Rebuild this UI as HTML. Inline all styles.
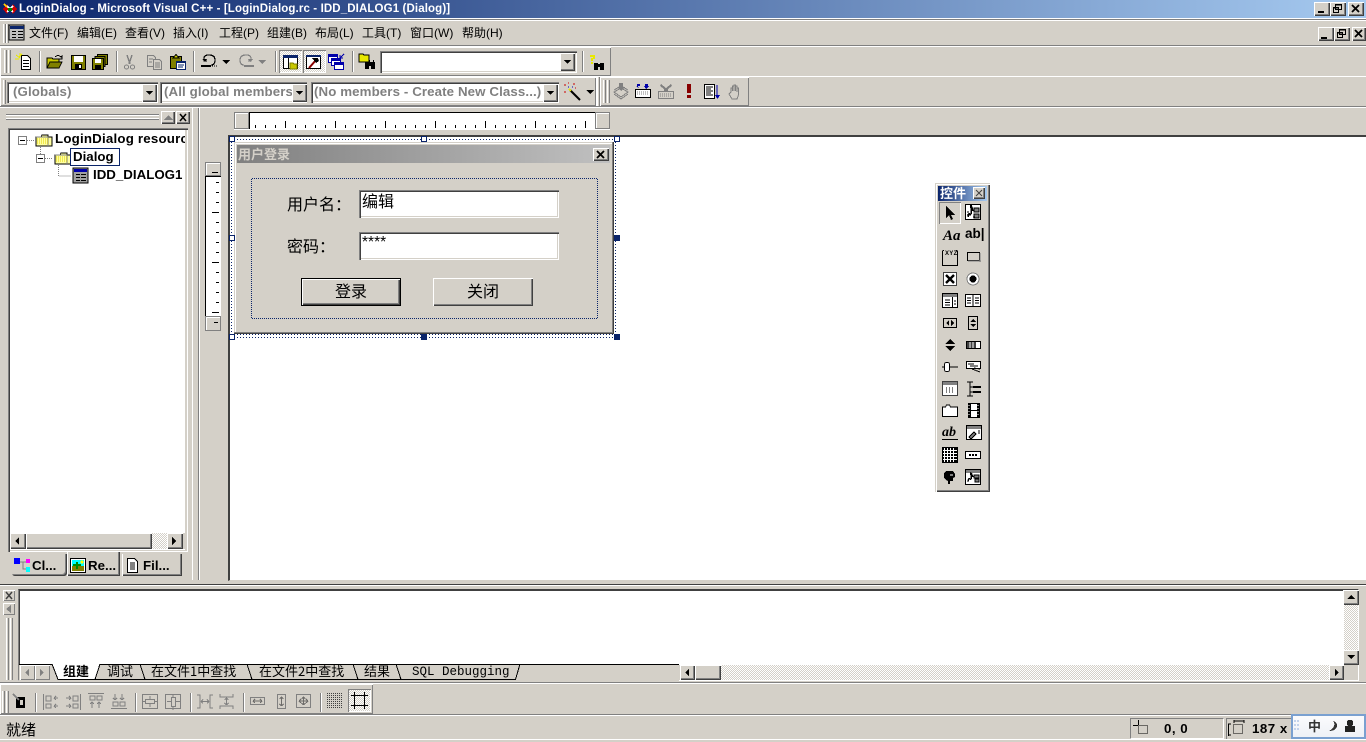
<!DOCTYPE html>
<html><head><meta charset="utf-8"><title>LoginDialog</title>
<style>
html,body{margin:0;padding:0;width:1366px;height:742px;overflow:hidden;background:#d4d0c8}
body{position:relative;font-family:"Liberation Sans","WenQuanYi Zen Hei","Noto Sans CJK SC",sans-serif;font-size:12px;color:#000}
div,span,svg{position:absolute;box-sizing:border-box}
svg{shape-rendering:crispEdges;overflow:visible}
.t{white-space:nowrap;line-height:16px}
.cj{font-family:"Noto Sans CJK SC","Liberation Sans",sans-serif}
.r{background:#d4d0c8;box-shadow:inset 1px 1px 0 #fff,inset -1px -1px 0 #404040,inset -2px -2px 0 #808080}
.tb{box-shadow:inset 1px 1px 0 #fff,inset -1px -1px 0 #808080}
.s{background:#fff;box-shadow:inset 1px 1px 0 #808080,inset 2px 2px 0 #404040,inset -1px -1px 0 #fff,inset -2px -2px 0 #d4d0c8}
.d{background:conic-gradient(#fff 25%,#d4d0c8 0 50%,#fff 0 75%,#d4d0c8 0) 0 0/2px 2px}
.g{width:3px;border-left:1px solid #fff;border-right:1px solid #808080;background:#d4d0c8}
.sep{width:2px;border-left:1px solid #808080;border-right:1px solid #fff}
.pr{box-shadow:inset 1px 1px 0 #808080,inset -1px -1px 0 #fff}
.h{width:6px;height:6px;background:#fff;border:1px solid #0a246a}
.hf{width:6px;height:6px;background:#0a246a}
.cb{color:#808080;font-size:13.300px;font-weight:bold;letter-spacing:.1px}
.dot{background:conic-gradient(#0a246a 25%,#0000 0 50%,#0a246a 0 75%,#0000 0) 0 0/2px 2px}
</style></head><body>

<!-- title bar -->
<div style="left:0;top:0;width:1366px;height:18px;background:linear-gradient(90deg,#0a246a,#a6caf0)"></div>
<svg style="left:2px;top:2px" width="16" height="14" viewBox="0 0 16 14"><path d="M1 7L5 2L8 7L5 12Z" fill="#c00"/><path d="M8 7L11 2L15 7L11 12Z" fill="#c00"/><path d="M5 4L11 10M11 4L5 10" stroke="#fff" stroke-width="2"/><path d="M2 2L5 5" stroke="#fc0" stroke-width="2"/><path d="M6 6h4v3h-4z" fill="#080"/></svg>
<div class="t" style="left:19px;top:1px;color:#fff;font-weight:bold;font-size:11.500px;letter-spacing:.12px">LoginDialog - Microsoft Visual C++ - [LoginDialog.rc - IDD_DIALOG1 (Dialog)]</div>
<div class="r" style="left:1314px;top:2px;width:16px;height:14px"></div><div style="left:1318px;top:11px;width:6px;height:2px;background:#000"></div>
<div class="r" style="left:1330px;top:2px;width:16px;height:14px"></div><svg style="left:1333px;top:4px" width="9" height="9"><path d="M2.500.5h6v5h-6zM.5 3.500h5v5h-5z" fill="none" stroke="#000"/><path d="M2 0h7v1.500H2zM0 3h6v1.500H0z"/></svg>
<div class="r" style="left:1348px;top:2px;width:16px;height:14px"></div><svg style="left:1351px;top:4px" width="10" height="9"><path d="M1 1L8 8M8 1L1 8" stroke="#000" stroke-width="1.800" shape-rendering="geometricPrecision"/></svg>

<div style="left:0;top:18px;width:1366px;height:1px;background:#fff"></div>
<div style="left:0;top:19px;width:1366px;height:1px;background:#808080"></div>
<div style="left:0;top:20px;width:1366px;height:1px;background:#fff"></div>

<!-- menu bar -->
<div class="g" style="left:3px;top:24px;height:19px"></div><div class="g" style="left:6px;top:24px;height:19px"></div>
<svg style="left:9px;top:25px" width="16" height="16"><rect width="15" height="15" fill="#c0c0c0" stroke="#000"/><rect x="1" y="1" width="14" height="3" fill="#0a246a"/><path d="M3 6.500h4M3 9.500h4M3 12.500h4M9 6.500h5M9 9.500h5M9 12.500h5" stroke="#000"/></svg>
<div class="t" style="left:29px;top:25px">文件(F)</div>
<div class="t" style="left:77px;top:25px">编辑(E)</div>
<div class="t" style="left:125px;top:25px">查看(V)</div>
<div class="t" style="left:173px;top:25px">插入(I)</div>
<div class="t" style="left:219px;top:25px">工程(P)</div>
<div class="t" style="left:267px;top:25px">组建(B)</div>
<div class="t" style="left:315px;top:25px">布局(L)</div>
<div class="t" style="left:362px;top:25px">工具(T)</div>
<div class="t" style="left:410px;top:25px">窗口(W)</div>
<div class="t" style="left:462px;top:25px">帮助(H)</div>
<div class="r" style="left:1318px;top:27px;width:16px;height:14px"></div><div style="left:1321px;top:37px;width:6px;height:2px;background:#000"></div>
<div class="r" style="left:1334px;top:27px;width:16px;height:14px"></div><svg style="left:1337px;top:29px" width="9" height="9"><path d="M2.500.5h6v5h-6zM.5 3.500h5v5h-5z" fill="none" stroke="#000"/><path d="M2 0h7v1.500H2zM0 3h6v1.500H0z"/></svg>
<div class="r" style="left:1352px;top:27px;width:14px;height:14px"></div><svg style="left:1354px;top:29px" width="10" height="9"><path d="M1 1L8 8M8 1L1 8" stroke="#000" stroke-width="1.800" shape-rendering="geometricPrecision"/></svg>
<div style="left:0;top:45px;width:1366px;height:1px;background:#808080"></div>
<div style="left:0;top:46px;width:1366px;height:1px;background:#fff"></div>

<!-- toolbar 2 -->
<div class="tb" style="left:0;top:47px;width:611px;height:29px"></div>
<div class="g" style="left:4px;top:50px;height:23px"></div><div class="g" style="left:8px;top:50px;height:23px"></div>
<svg style="left:15px;top:53px" width="17" height="18"><path d="M6.500 2.500h6l3 3v11h-9z" fill="#fff" stroke="#000"/><path d="M8 7.500h6M8 10.500h6M8 13.500h6" stroke="#000"/><path d="M1 2l4 3M5 0v4M0 6h4M7 1L4 4" stroke="#e8e800"/></svg>
<div class="sep" style="left:39px;top:51px;height:21px"></div>
<svg style="left:46px;top:54px" width="18" height="16"><path d="M1 4h5l1 1h6v9H1z" fill="#c8c800" stroke="#000"/><path d="M1 14L4 8h12l-3 6z" fill="#808000" stroke="#000"/><path d="M9 3q3-3 6 0l1-1v3h-3" fill="none" stroke="#000"/></svg>
<svg style="left:71px;top:55px" width="15" height="15"><rect x=".5" y=".5" width="14" height="14" fill="#808000" stroke="#000"/><rect x="3" y="1" width="9" height="6" fill="#fff"/><rect x="4" y="9" width="7" height="5" fill="#000"/><rect x="8" y="10" width="2" height="3" fill="#fff"/></svg>
<svg style="left:92px;top:54px" width="16" height="16"><rect x="5.500" y=".5" width="10" height="10" fill="#808000" stroke="#000"/><rect x="3" y="2.500" width="10" height="10" fill="#808000" stroke="#000"/><rect x=".5" y="4.500" width="11" height="11" fill="#808000" stroke="#000"/><rect x="3" y="5" width="6" height="4" fill="#fff"/><rect x="3" y="11" width="6" height="4" fill="#000"/></svg>
<div class="sep" style="left:116px;top:51px;height:21px"></div>
<svg style="left:124px;top:55px" width="11" height="16"><path d="M3 0l3 9M8 0L5 9" stroke="#808080" stroke-width="1.300" fill="none"/><circle cx="2.500" cy="12" r="2" fill="none" stroke="#808080"/><circle cx="8.500" cy="12" r="2" fill="none" stroke="#808080"/></svg>
<svg style="left:147px;top:55px" width="16" height="15"><path d="M.5.500h6l2 2v9H.5z" fill="#d4d0c8" stroke="#808080"/><path d="M6.500 4.500h6l2 2v8h-8z" fill="#d4d0c8" stroke="#808080"/><path d="M2 4h4M2 7h3M8 8h5M8 10h5M8 12h5" stroke="#808080"/></svg>
<svg style="left:170px;top:54px" width="17" height="16"><rect x=".5" y="2.500" width="11" height="12" fill="#808000" stroke="#000"/><path d="M3 4L6 .5 9 4z" fill="#c8c800" stroke="#000"/><rect x="6.500" y="7.500" width="9" height="8" fill="#fff" stroke="#0a246a" stroke-width="1"/><rect x="6" y="7" width="10" height="2" fill="#0a246a"/><path d="M8 11h6M8 13h5" stroke="#0a246a"/></svg>
<div class="sep" style="left:193px;top:51px;height:21px"></div>
<svg style="left:201px;top:54px" width="17" height="14"><path d="M6 7H3Q2 .5 8 1q6 0 6 5t-4 5" fill="none" stroke="#000" stroke-width="1.200"/><path d="M1 5l3 3 2-3z"/><rect y="11" width="10" height="2"/><path d="M11 12h6" stroke="#000" stroke-dasharray="1 1"/></svg>
<svg style="left:222px;top:60px" width="8" height="4"><path d="M0 0h8L4 4z"/></svg>
<svg style="left:237px;top:54px" width="17" height="14"><path d="M11 7h3q1-6.500-5-6-6 0-6 5t4 5" fill="none" stroke="#808080" stroke-width="1.200"/><path d="M16 5l-3 3-2-3z" fill="#808080"/><rect x="7" y="11" width="10" height="2" fill="#808080"/></svg>
<svg style="left:258px;top:60px" width="8" height="4"><path d="M0 0h8L4 4z" fill="#808080"/></svg>
<div class="sep" style="left:275px;top:51px;height:21px"></div>
<div class="d pr" style="left:279px;top:50px;width:23px;height:23px"></div>
<div class="d pr" style="left:303px;top:50px;width:23px;height:23px"></div>
<svg style="left:283px;top:55px" width="16" height="15"><rect x=".5" y=".5" width="14" height="13" fill="#fff" stroke="#000"/><rect y="0" width="15" height="3" fill="#0a246a"/><path d="M5.500 3v10" stroke="#000"/><path d="M7 8h3l1 1h3v5H7z" fill="#c8c800" stroke="#808000"/></svg>
<svg style="left:306px;top:55px" width="16" height="15"><rect x=".5" y=".5" width="14" height="13" fill="#fff" stroke="#000"/><rect y="0" width="15" height="2" fill="#0a246a"/><path d="M3 13L10 5" stroke="#800" stroke-width="2" shape-rendering="geometricPrecision"/><path d="M6 3h6l1 3-3 2z" fill="#000"/></svg>
<svg style="left:328px;top:53px" width="17" height="18"><rect x=".5" y="1.500" width="9" height="8" fill="#fff" stroke="#00a"/><rect y="1" width="10" height="3" fill="#00a"/><rect x="3.500" y="5.500" width="9" height="7" fill="#fff" stroke="#00a"/><rect x="3" y="5" width="10" height="3" fill="#00a"/><rect x="6.500" y="9.500" width="9" height="7" fill="#fff" stroke="#00a"/><rect x="6" y="9" width="10" height="3" fill="#00a"/><path d="M12 5l4-4M12 2v3h3" stroke="#00a" fill="none"/></svg>
<div class="sep" style="left:352px;top:51px;height:21px"></div>
<svg style="left:359px;top:53px" width="17" height="18"><path d="M0 1h4l1 1h5v7H0z" fill="#e8e800" stroke="#000"/><path d="M6 9h4v-2h1v2h3v-2h1v2h1v7h-4v-3h-2v3H6z"/></svg>
<div class="s" style="left:380px;top:51px;width:197px;height:22px"></div>
<div class="r" style="left:560px;top:53px;width:15px;height:18px"></div><svg style="left:564px;top:60px" width="7" height="4"><path d="M0 0h7L3.500 4z"/></svg>
<div class="sep" style="left:582px;top:51px;height:21px"></div>
<svg style="left:589px;top:54px" width="18" height="17"><path d="M1 1h5v4H4v2H2V4h2V3H1z" fill="#e8e800"/><rect x="2" y="8" width="2" height="2" fill="#e8e800"/><path d="M5 9h4v1h2v-1h4v7h-4v-3h-2v3H5z"/></svg>

<div style="left:0;top:76px;width:1366px;height:1px;background:#fff"></div>

<!-- toolbar 3 -->
<div class="tb" style="left:0;top:77px;width:596px;height:29px"></div>
<div class="g" style="left:3px;top:80px;height:24px"></div>
<div class="s" style="left:7px;top:82px;width:151px;height:21px"></div>
<div class="t cb" style="left:13px;top:84px">(Globals)</div>
<div class="r" style="left:142px;top:84px;width:15px;height:18px"></div><svg style="left:146px;top:91px" width="7" height="4"><path d="M0 0h7L3.500 4z"/></svg>
<div class="s" style="left:160px;top:82px;width:147px;height:21px"></div>
<div class="t cb" style="left:164px;top:84px;width:128px;overflow:hidden">(All global members)</div>
<div class="r" style="left:292px;top:84px;width:15px;height:18px"></div><svg style="left:296px;top:91px" width="7" height="4"><path d="M0 0h7L3.500 4z"/></svg>
<div class="s" style="left:311px;top:82px;width:248px;height:21px"></div>
<div class="t cb" style="left:314px;top:84px;width:230px;overflow:hidden">(No members - Create New Class...)</div>
<div class="r" style="left:543px;top:84px;width:15px;height:18px"></div><svg style="left:547px;top:91px" width="7" height="4"><path d="M0 0h7L3.500 4z"/></svg>
<svg style="left:563px;top:83px" width="19" height="18"><path d="M7 7L17 17" stroke="#000" stroke-width="2" shape-rendering="geometricPrecision"/><path d="M6 6l2 2" stroke="#e8e800" stroke-width="2"/><path d="M1 2h2M10 1h2M5 0h1M1 9h2M12 5h1" stroke="#c00"/><path d="M5 4h1M9 4h1" stroke="#00a"/></svg>
<svg style="left:586px;top:90px" width="8" height="4"><path d="M0 0h8L4 4z"/></svg>
<div style="left:596px;top:77px;width:2px;height:29px;background:#fff"></div>
<div class="tb" style="left:600px;top:77px;width:149px;height:29px"></div>
<div style="left:599px;top:77px;width:1px;height:29px;background:#808080"></div>
<div class="g" style="left:603px;top:80px;height:23px"></div><div class="g" style="left:607px;top:80px;height:23px"></div>
<svg style="left:613px;top:83px" width="17" height="17"><path d="M1 9l7-4 7 4-7 5z" fill="#d4d0c8" stroke="#808080"/><path d="M1 11l7 5 7-5M1 7l7-4 7 4" fill="none" stroke="#808080"/><path d="M6 0h4v4h2L8 8 4 4h2z" fill="#808080"/></svg>
<svg style="left:635px;top:83px" width="17" height="16"><rect x=".5" y="6.500" width="15" height="8" fill="#fff" stroke="#000"/><path d="M2 9h12M2 11h12" stroke="#808080" stroke-dasharray="1 1"/><path d="M2 1h3v2H3l1 3-3-3h1zM10 1h3v2h1l-3 3-2-3h1z" fill="#00a"/></svg>
<svg style="left:658px;top:83px" width="16" height="16"><rect x=".5" y="8.500" width="15" height="7" fill="#d4d0c8" stroke="#808080"/><path d="M2 11h12M2 13h12" stroke="#808080" stroke-dasharray="1 1"/><path d="M3 1l5 4 5-4 1 2-4 3v2H6V6L2 3z" fill="#808080"/></svg>
<svg style="left:686px;top:84px" width="6" height="15"><rect x="1" width="4" height="9" fill="#800"/><rect x="1" y="11" width="4" height="3" fill="#800"/></svg>
<svg style="left:704px;top:84px" width="16" height="16"><rect x=".5" y=".5" width="10" height="14" fill="#fff" stroke="#000"/><path d="M2 3h7M2 5h5M2 7h7M2 9h5M2 11h7" stroke="#000"/><path d="M13 1v12" stroke="#00a"/><path d="M11 11h5l-2.500 4z" fill="#00a"/></svg>
<svg style="left:728px;top:84px" width="15" height="16"><path d="M3 8V4h1.500v3V2H6v5V1h1.500v6V2H9v6V4h1.500v7L9 15H4L1 10l1-1z" fill="#d4d0c8" stroke="#808080"/></svg>

<div style="left:0;top:106px;width:1366px;height:1px;background:#808080"></div>
<div style="left:0;top:107px;width:1366px;height:1px;background:#fff"></div>

<!-- workspace panel -->
<div style="left:192px;top:108px;width:1px;height:472px;background:#fff"></div>
<div style="left:198px;top:108px;width:1px;height:472px;background:#808080"></div>
<div style="left:199px;top:108px;width:1px;height:472px;background:#fff"></div>
<div style="left:6px;top:114px;width:153px;height:6px;border-top:1px solid #808080;border-bottom:1px solid #808080;background:linear-gradient(#fff 1px,#d4d0c8 1px 3px,#fff 3px 4px)"></div>
<div class="r" style="left:161px;top:111px;width:14px;height:13px"></div><svg style="left:164px;top:115px" width="9" height="5"><path d="M0 5h9L4.500 0z" fill="#808080"/></svg>
<div class="r" style="left:176px;top:111px;width:14px;height:13px"></div><svg style="left:179px;top:114px" width="8" height="7"><path d="M1 0l6 7M7 0L1 7" stroke="#000" stroke-width="1.500" shape-rendering="geometricPrecision"/></svg>

<div class="s" style="left:8px;top:128px;width:180px;height:424px"></div>
<div style="left:10px;top:130px;width:176px;height:420px;overflow:hidden;background:#fff">
 <svg style="left:8px;top:6px" width="60" height="50"><rect x=".5" y=".5" width="8" height="8" fill="#fff" stroke="#808080"/><path d="M2 4.500h5" stroke="#000"/><path d="M9 4.500h7" stroke="#808080" stroke-dasharray="1 1"/><path d="M22.500 9v9" stroke="#808080" stroke-dasharray="1 1"/><rect x="18.500" y="18.500" width="8" height="8" fill="#fff" stroke="#808080"/><path d="M20 22.500h5" stroke="#000"/><path d="M27 22.500h7M40.500 27v13h12" stroke="#808080" stroke-dasharray="1 1" fill="none"/></svg>
 <svg style="left:25px;top:3px" width="18" height="14"><path d="M1 4h5l1-2h6v2h4v9H1z" fill="#ffffa0" stroke="#000"/><path d="M1 4h12v9" fill="none" stroke="#808080"/><path d="M2 6h11M2 8h11M2 10h11" stroke="#e0d000" stroke-dasharray="1 1"/></svg>
 <svg style="left:44px;top:21px" width="18" height="14"><path d="M1 4h5l1-2h6v2h4v9H1z" fill="#ffffa0" stroke="#000"/><path d="M1 4h12v9" fill="none" stroke="#808080"/><path d="M2 6h11M2 8h11M2 10h11" stroke="#e0d000" stroke-dasharray="1 1"/></svg>
 <svg style="left:63px;top:38px" width="15" height="15"><rect width="15" height="15" fill="#a0a0a0" stroke="#000"/><rect x="1" y="1" width="13" height="3" fill="#00a"/><path d="M3 6.500h4M8 6.500h5M3 9.500h4M8 9.500h5M3 12.500h4M8 12.500h5" stroke="#000"/></svg>
 <div class="t" style="left:45px;top:1px;font-weight:bold;font-size:13.300px;letter-spacing:.2px">LoginDialog resource</div>
 <div style="left:60px;top:18px;width:50px;height:18px;border:1px solid #0a246a;background:#fff"></div>
 <div class="t" style="left:63px;top:19px;font-weight:bold;font-size:13.300px">Dialog</div>
 <div class="t" style="left:83px;top:37px;font-weight:bold;font-size:13.300px">IDD_DIALOG1</div>
</div>
<div style="left:185px;top:130px;width:1px;height:420px;background:#d4d0c8"></div>
<div style="left:10px;top:533px;width:175px;height:16px;background:#d4d0c8"></div>
<div class="r" style="left:10px;top:533px;width:16px;height:16px"></div><svg style="left:15px;top:537px" width="5" height="8"><path d="M4 0v8L0 4z"/></svg>
<div class="r" style="left:26px;top:533px;width:126px;height:16px"></div>
<div class="d" style="left:152px;top:533px;width:16px;height:16px"></div>
<div class="r" style="left:167px;top:533px;width:16px;height:16px"></div><svg style="left:172px;top:537px" width="5" height="8"><path d="M0 0v8l4-4z"/></svg>

<!-- tabs -->
<div style="left:12px;top:554px;width:55px;height:22px;background:#d4d0c8;box-shadow:inset -1px -1px 0 #404040,inset -2px -2px 0 #808080;border-radius:0 0 3px 3px"></div>
<div style="left:67px;top:552px;width:53px;height:24px;background:#d4d0c8;box-shadow:inset 1px 0 0 #fff,inset -1px -1px 0 #404040,inset -2px -2px 0 #808080"></div>
<div style="left:122px;top:554px;width:60px;height:22px;background:#d4d0c8;box-shadow:inset 1px 0 0 #fff,inset -1px -1px 0 #404040,inset -2px -2px 0 #808080"></div>
<svg style="left:14px;top:558px" width="16" height="15"><rect width="6" height="6" fill="#00f"/><rect x="12" y="1" width="4" height="4" fill="#f0f"/><rect x="12" y="9" width="4" height="5" fill="#0ff"/><path d="M6 4h6M9 4v7h3" stroke="#808080" fill="none"/></svg>
<div class="t" style="left:32px;top:558px;font-weight:bold;font-size:13.300px">Cl...</div>
<svg style="left:70px;top:558px" width="16" height="15"><rect x=".5" y=".5" width="15" height="14" fill="#fff" stroke="#000"/><rect x="2" y="2" width="12" height="11" fill="#0ff"/><rect x="2" y="8" width="12" height="5" fill="#808000"/><path d="M6 4h2v7H6zM3 6h8v2H3z" fill="#080"/><circle cx="12" cy="4" r="1.500" fill="#ff0"/></svg>
<div class="t" style="left:88px;top:558px;font-weight:bold;font-size:13.300px">Re...</div>
<svg style="left:127px;top:558px" width="12" height="15"><path d="M.5.500h7l3 3v11H.5z" fill="#fff" stroke="#000"/><path d="M3 5h5M3 7h5M3 9h5M3 11h5" stroke="#000"/></svg>
<div class="t" style="left:143px;top:558px;font-weight:bold;font-size:13.300px">Fil...</div>

<!-- editor -->
<div style="left:228px;top:135px;width:1138px;height:446px;background:#fff;border-top:2px solid #404040;border-left:2px solid #404040;border-bottom:1px solid #d4d0c8"></div>
<!-- ruler h -->
<div style="left:234px;top:112px;width:376px;height:18px;background:#d4d0c8;box-shadow:inset -1px -1px 0 #fff"></div>
<div style="left:249px;top:112px;width:346px;height:17px;background:#fff;border-top:1px solid #000;border-left:1px solid #000"></div>
<svg style="left:249px;top:113px" width="346" height="16"><defs><pattern id="rh" x="6" y="0" width="50" height="16" patternUnits="userSpaceOnUse"><rect y="12" width="1" height="3"/><rect x="10" y="12" width="1" height="3"/><rect x="20" y="12" width="1" height="3"/><rect x="30" y="8" width="1" height="7"/><rect x="40" y="12" width="1" height="3"/></pattern></defs><rect width="346" height="16" fill="url(#rh)"/></svg>
<div class="r" style="left:234px;top:112px;width:15px;height:17px;box-shadow:inset 1px 1px 0 #808080,inset -1px -1px 0 #808080,inset 2px 2px 0 #fff"></div>
<div class="r" style="left:595px;top:112px;width:15px;height:17px;box-shadow:inset 1px 1px 0 #808080,inset -1px -1px 0 #808080,inset 2px 2px 0 #fff"></div>
<!-- ruler v -->
<div style="left:205px;top:176px;width:16px;height:141px;background:#fff;border-left:1px solid #000;border-top:1px solid #000"></div>
<svg style="left:206px;top:177px" width="14" height="140"><defs><pattern id="rv" x="0" y="5" width="14" height="50" patternUnits="userSpaceOnUse"><rect x="10" y="0" width="3" height="1"/><rect x="10" y="10" width="3" height="1"/><rect x="6" y="30" width="7" height="1"/><rect x="10" y="20" width="3" height="1"/><rect x="10" y="40" width="3" height="1"/></pattern></defs><rect width="14" height="140" fill="url(#rv)"/></svg>
<div style="left:205px;top:162px;width:16px;height:14px;background:#d4d0c8;box-shadow:inset 1px 1px 0 #808080,inset -1px -1px 0 #808080,inset 2px 2px 0 #fff"></div>
<div style="left:205px;top:316px;width:16px;height:15px;background:#d4d0c8;box-shadow:inset 1px 1px 0 #808080,inset -1px -1px 0 #808080,inset 2px 2px 0 #fff"></div>
<div style="left:212px;top:172px;width:6px;height:1px;background:#000"></div>
<div style="left:214px;top:322px;width:4px;height:1px;background:#000"></div>

<!-- dialog selection band -->
<svg style="left:231px;top:139px" width="386" height="199"><defs><pattern id="dots" width="3" height="3" patternUnits="userSpaceOnUse"><rect width="1" height="1" fill="#0a246a"/></pattern></defs><rect width="386" height="199" fill="#fff"/><rect width="386" height="199" fill="url(#dots)"/></svg>
<div style="left:234px;top:142px;width:380px;height:192px;background:#d4d0c8;box-shadow:inset -1px -1px 0 #404040,inset -2px -2px 0 #808080,inset 1px 1px 0 #d4d0c8,inset 2px 2px 0 #fff"></div>
<div style="left:237px;top:145px;width:373px;height:18px;background:linear-gradient(90deg,#808080,#c0c0c0)"></div>
<div class="t cj" style="left:238px;top:146px;color:#d4d0c8;font-weight:bold;font-size:13px">用户登录</div>
<div class="r" style="left:593px;top:148px;width:16px;height:13px"></div><svg style="left:596px;top:150px" width="10" height="9"><path d="M1 1L8 8M8 1L1 8" stroke="#000" stroke-width="1.800" shape-rendering="geometricPrecision"/></svg>
<div class="dot" style="left:251px;top:178px;width:347px;height:1px"></div>
<div class="dot" style="left:251px;top:318px;width:347px;height:1px"></div>
<div class="dot" style="left:251px;top:178px;width:1px;height:141px"></div>
<div class="dot" style="left:597px;top:178px;width:1px;height:141px"></div>
<div class="t cj" style="left:287px;top:194px;font-size:16px;line-height:18px">用户名：</div>
<div class="t cj" style="left:287px;top:236px;font-size:16px;line-height:18px">密码：</div>
<div class="s" style="left:359px;top:190px;width:200px;height:28px"></div>
<div class="s" style="left:359px;top:232px;width:200px;height:28px"></div>
<div class="t cj" style="left:362px;top:191px;font-size:16px;line-height:18px">编辑</div>
<div class="t" style="left:362px;top:236px;font-size:15.500px;line-height:14px">****</div>
<div style="left:301px;top:278px;width:100px;height:28px;background:#d4d0c8;border:1px solid #000;box-shadow:inset 1px 1px 0 #fff,inset -1px -1px 0 #404040,inset -2px -2px 0 #808080"></div>
<div class="r" style="left:433px;top:278px;width:100px;height:28px"></div>
<div class="t cj" style="left:335px;top:281px;font-size:16px;line-height:18px">登录</div>
<div class="t cj" style="left:467px;top:281px;font-size:16px;line-height:18px">关闭</div>
<div class="h" style="left:229px;top:136px"></div><div class="h" style="left:421px;top:136px"></div><div class="h" style="left:614px;top:136px"></div>
<div class="h" style="left:229px;top:235px"></div><div class="hf" style="left:614px;top:235px"></div>
<div class="h" style="left:229px;top:334px"></div><div class="hf" style="left:421px;top:334px"></div><div class="hf" style="left:614px;top:334px"></div>

<!-- control toolbox -->
<div class="r" style="left:935px;top:183px;width:55px;height:309px;box-shadow:inset 1px 1px 0 #d4d0c8,inset 2px 2px 0 #fff,inset -1px -1px 0 #404040,inset -2px -2px 0 #808080"></div>
<div style="left:938px;top:186px;width:49px;height:15px;background:linear-gradient(90deg,#0a246a,#a6caf0)"></div>
<div class="t cj" style="left:940px;top:185px;color:#fff;font-weight:bold;font-size:13px">控件</div>
<div class="r" style="left:973px;top:187px;width:12px;height:12px"></div><svg style="left:975px;top:189px" width="8" height="8"><path d="M1 1l6 6M7 1L1 7" stroke="#404040" shape-rendering="geometricPrecision"/></svg>
<div style="left:939px;top:202px;width:22px;height:22px;background:#d4d0c8;box-shadow:inset 1px 1px 0 #808080,inset -1px -1px 0 #fff"></div>
<svg style="left:945px;top:206px" width="11" height="15"><path d="M1 0v12l3-3 2 5 2-1-2-4h4z"/></svg>
<svg style="left:965px;top:204px" width="17" height="17"><rect x=".5" y=".5" width="15" height="15" fill="#fff" stroke="#000"/><path d="M3 13q0-4 2-3t1-6 2 3" fill="none" stroke="#000" stroke-width="1.500"/><path d="M9 4h5v4H9zM9 10h5v4H9z" fill="#808080" stroke="#000"/><path d="M2 8h2M2 11h4M8 13h2" stroke="#000"/></svg>
<div class="t" style="left:943px;top:228px;font-family:'Liberation Serif',serif;font-style:italic;font-weight:bold;font-size:15px">Aa</div>
<div class="t" style="left:965px;top:226px;font-weight:bold;font-size:13.500px">ab|</div>
<svg style="left:942px;top:249px" width="16" height="17"><path d="M.5 2v14.500h15V2" fill="none" stroke="#000"/><path d="M.5 1.500h1.500M14 1.500h1.500" stroke="#000"/></svg>
<div class="t" style="left:945px;top:246px;font-size:6px;letter-spacing:.3px;font-weight:bold">XYZ</div>
<svg style="left:967px;top:252px" width="14" height="10"><rect x=".5" y=".5" width="12" height="8" fill="#d4d0c8" stroke="#000"/><path d="M1 9h13M13 1v9" stroke="#808080"/></svg>
<svg style="left:943px;top:272px" width="14" height="14"><rect x=".5" y=".5" width="13" height="13" fill="#fff" stroke="#404040" stroke-width="1"/><path d="M3 3l8 8M11 3l-8 8" stroke="#000" stroke-width="2.400" shape-rendering="geometricPrecision"/></svg>
<svg style="left:966px;top:272px" width="14" height="14" shape-rendering="geometricPrecision"><circle cx="7" cy="7" r="6" fill="#fff" stroke="#808080"/><circle cx="7" cy="7" r="3.500"/></svg>
<svg style="left:942px;top:293px" width="17" height="15"><rect x=".5" y=".5" width="15" height="14" fill="#fff" stroke="#000"/><rect x="1" y="1" width="14" height="3" fill="#808080"/><path d="M10.500 4v10M3 7h5M3 9.500h5M3 12h5M12 8h2M12 11h2" stroke="#000"/></svg>
<svg style="left:965px;top:294px" width="16" height="13"><rect x=".5" y=".5" width="15" height="12" fill="#fff" stroke="#000"/><path d="M8 1v11M2 4h4M2 6.500h4M2 9h4M10 4h4M10 6.500h4M10 9h4" stroke="#000"/></svg>
<svg style="left:943px;top:318px" width="14" height="10"><rect x=".5" y=".5" width="13" height="9" fill="#d4d0c8" stroke="#000"/><path d="M6 2v6L3 5zM8 2v6l3-3z"/></svg>
<svg style="left:968px;top:316px" width="10" height="14"><rect x=".5" y=".5" width="9" height="13" fill="#d4d0c8" stroke="#000"/><path d="M2 6h6L5 3zM2 8h6l-3 3z"/></svg>
<svg style="left:944px;top:338px" width="12" height="14"><path d="M1 6h10L6 1zM1 8h10l-5 5z"/></svg>
<svg style="left:966px;top:341px" width="15" height="8"><rect x=".5" y=".5" width="14" height="7" fill="#fff" stroke="#000"/><rect x="1" y="1" width="9" height="6" fill="#404040"/><path d="M4 1v6M7 1v6" stroke="#fff"/></svg>
<svg style="left:942px;top:361px" width="16" height="12"><path d="M8 6h8" stroke="#000"/><rect x="2.500" y="1.500" width="5" height="9" rx="2" fill="#fff" stroke="#000"/><path d="M0 6h2" stroke="#000"/></svg>
<svg style="left:966px;top:361px" width="16" height="12"><rect x=".5" y=".5" width="14" height="7" fill="#fff" stroke="#000"/><path d="M2 3h6M4 5h8M6 8l8 3M8 7l6 1" stroke="#000"/></svg>
<svg style="left:942px;top:381px" width="16" height="16"><rect x=".5" y=".5" width="15" height="14" fill="#fff" stroke="#404040"/><rect x="1" y="1" width="14" height="3" fill="#808080"/><path d="M4 7h2M7 7h2M10 7h2M4 9h2M7 9h2M10 9h2M4 11h2M7 11h2M10 11h2" stroke="#000" stroke-dasharray="1 1"/></svg>
<svg style="left:967px;top:381px" width="14" height="16"><path d="M0 1h6M3 1v14M0 15h6M3 6h3M3 11h3" stroke="#000" fill="none"/><rect x="6" y="5" width="8" height="2"/><rect x="6" y="10" width="8" height="2"/></svg>
<svg style="left:942px;top:404px" width="16" height="13"><path d="M.5 3h3l1-2h3l1 2h7v9.500H.5z" fill="#fff" stroke="#000"/></svg>
<svg style="left:968px;top:403px" width="12" height="15"><rect x=".5" y=".5" width="11" height="14" fill="#fff" stroke="#000"/><rect x="0" y="0" width="3" height="15"/><rect x="9" y="0" width="3" height="15"/><path d="M3 7.500h6" stroke="#000"/><path d="M1 2v1M1 5v1M1 8v1M1 11v1M10 2v1M10 5v1M10 8v1M10 11v1" stroke="#fff"/></svg>
<div class="t" style="left:942px;top:425px;font-family:'Liberation Serif',serif;font-style:italic;font-weight:bold;font-size:14px">ab</div>
<div style="left:942px;top:439px;width:16px;height:1px;background:#000"></div>
<svg style="left:966px;top:425px" width="16" height="15"><rect x=".5" y=".5" width="15" height="14" fill="#fff" stroke="#000"/><rect x="1" y="1" width="14" height="3" fill="#808080"/><path d="M3 12l5-5 2 2-5 5z" fill="#808080" stroke="#000"/><path d="M12 6h2M12 8h2" stroke="#000"/></svg>
<svg style="left:942px;top:447px" width="16" height="16"><rect width="16" height="16"/><path d="M2.500 1v14M5.500 1v14M8.500 1v14M11.500 1v14M1 3.500h14M1 6.500h14M1 9.500h14M1 12.500h14" stroke="#fff"/></svg>
<svg style="left:965px;top:451px" width="16" height="8"><rect x=".5" y=".5" width="15" height="7" fill="#fff" stroke="#000"/><path d="M4 3h2v2H4zM7 3h2v2H7zM10 3h2v2h-2z"/></svg>
<svg style="left:943px;top:470px" width="13" height="14"><path d="M3 1h7l2 3v3l-2 1v3H7v3H5v-3l-2-1-2-2V3z"/><path d="M7 5h3" stroke="#fff"/></svg>
<svg style="left:965px;top:469px" width="17" height="16"><rect x=".5" y=".5" width="15" height="15" fill="#fff" stroke="#000"/><rect x="1" y="1" width="14" height="3" fill="#808080"/><path d="M3 13q0-4 2-3t1-4 2 2" fill="none" stroke="#000" stroke-width="1.400"/><path d="M9 6h5v3H9zM10 10h4v3h-4z" fill="#808080" stroke="#000"/></svg>

<!-- output panel -->
<div style="left:0;top:584px;width:1366px;height:1px;background:#404040"></div>
<div style="left:0;top:585px;width:1366px;height:1px;background:#fff"></div>
<div class="r" style="left:3px;top:590px;width:12px;height:11px;box-shadow:inset 1px 1px 0 #fff,inset -1px -1px 0 #808080"></div><svg style="left:5px;top:592px" width="8" height="7"><path d="M1 0l6 7M7 0L1 7" stroke="#404040" stroke-width="1.500" shape-rendering="geometricPrecision"/></svg>
<div class="r" style="left:3px;top:603px;width:12px;height:12px;box-shadow:inset 1px 1px 0 #fff,inset -1px -1px 0 #808080"></div><svg style="left:6px;top:605px" width="6" height="8"><path d="M5 0v8L0 4z" fill="#808080"/></svg>
<div class="g" style="left:6px;top:618px;height:62px"></div><div class="g" style="left:10px;top:618px;height:62px"></div>
<div style="left:18px;top:589px;width:1341px;height:92px;background:#d4d0c8;border-top:1px solid #404040;border-left:1px solid #808080;border-right:1px solid #fff;border-bottom:1px solid #fff"></div>
<div style="left:19px;top:590px;width:1325px;height:75px;background:#fff;border-top:1px solid #404040;border-left:1px solid #404040"></div>
<div class="d" style="left:1344px;top:604px;width:14px;height:46px"></div>
<div class="r" style="left:1343px;top:590px;width:16px;height:15px"></div><svg style="left:1347px;top:595px" width="8" height="4"><path d="M0 4h8L4 0z"/></svg>
<div class="r" style="left:1343px;top:650px;width:16px;height:15px"></div><svg style="left:1347px;top:655px" width="8" height="4"><path d="M0 0h8L4 4z"/></svg>
<div style="left:19px;top:664px;width:660px;height:17px;background:#d4d0c8;border-top:1px solid #000"></div>
<div class="r" style="left:20px;top:665px;width:15px;height:15px;box-shadow:inset 1px 1px 0 #fff,inset -1px -1px 0 #808080"></div><svg style="left:25px;top:669px" width="4" height="7"><path d="M4 0v7L0 3.500z" fill="#808080"/></svg>
<div class="r" style="left:35px;top:665px;width:15px;height:15px;box-shadow:inset 1px 1px 0 #fff,inset -1px -1px 0 #808080"></div><svg style="left:40px;top:669px" width="4" height="7"><path d="M0 0v7l4-3.500z" fill="#808080"/></svg>
<svg style="left:50px;top:664px" width="630" height="17" shape-rendering="geometricPrecision"><path d="M2 0L8 15.500H45L50 0z" fill="#fff"/><path d="M2 0L8 15.500H465.500L470 0M50 0L45 15.500M90 0L95 15.500M197 0L202 15.500M303 0L308 15.500M346 0L351 15.500" stroke="#000" fill="none"/></svg>
<div class="t cj" style="left:63px;top:663px;font-weight:bold;font-size:13px">组建</div>
<div class="t cj" style="left:107px;top:663px;font-size:13px">调试</div>
<div class="t cj" style="left:151px;top:663px;font-size:13px">在文件1中查找</div>
<div class="t cj" style="left:259px;top:663px;font-size:13px">在文件2中查找</div>
<div class="t cj" style="left:364px;top:663px;font-size:13px">结果</div>
<div class="t" style="left:412px;top:664px;font-family:'Liberation Mono',monospace;font-size:12.500px">SQL Debugging</div>
<div class="d" style="left:680px;top:665px;width:649px;height:15px"></div>
<div class="r" style="left:680px;top:665px;width:15px;height:15px"></div><svg style="left:685px;top:669px" width="4" height="7"><path d="M4 0v7L0 3.500z"/></svg>
<div class="r" style="left:695px;top:665px;width:26px;height:15px"></div>
<div class="r" style="left:1329px;top:665px;width:15px;height:15px"></div><svg style="left:1335px;top:669px" width="4" height="7"><path d="M0 0v7l4-3.500z"/></svg>

<!-- bottom toolbar -->
<div style="left:0;top:682px;width:1366px;height:1px;background:#808080"></div>
<div style="left:0;top:683px;width:1366px;height:1px;background:#fff"></div>
<div class="tb" style="left:0;top:684px;width:373px;height:30px"></div>
<div class="g" style="left:2px;top:691px;height:22px"></div><div class="g" style="left:6px;top:691px;height:22px"></div>
<svg style="left:12px;top:693px" width="14" height="16"><rect x="4" y="4" width="9" height="11"/><path d="M1 1l6 6" stroke="#808080" stroke-width="2"/><rect x="8" y="7" width="3" height="5" fill="#d4d0c8"/></svg>
<div class="sep" style="left:35px;top:693px;height:19px"></div>
<svg style="left:43px;top:694px" width="16" height="16"><path d="M.5 0v16M3 2h5v5H3zM3 10h5v4H3zM15 4h-4M11 4l2-2M11 4l2 2M15 12h-4M11 12l2-2M11 12l2 2" stroke="#808080" fill="none"/></svg>
<svg style="left:65px;top:694px" width="16" height="16"><path d="M15.500 0v16M8 2h5v5H8zM8 10h5v4H8zM1 4h5M6 4l-2-2M6 4L4 6M1 12h5M6 12l-2-2M6 12l-2 2" stroke="#808080" fill="none"/></svg>
<svg style="left:88px;top:693px" width="16" height="16"><path d="M0 .5h16M2 3h5v4H2zM9 3h5v4H9zM4 15v-5M4 9L2 11M4 9l2 2M11 15v-5M11 9l-2 2M11 9l2 2" stroke="#808080" fill="none"/></svg>
<svg style="left:111px;top:693px" width="16" height="16"><path d="M0 15.500h16M2 9h5v4H2zM9 9h5v4H9zM4 1v6M4 7L2 5M4 7l2-2M11 1v6M11 7L9 5M11 7l2-2" stroke="#808080" fill="none"/></svg>
<div class="sep" style="left:135px;top:693px;height:19px"></div>
<svg style="left:142px;top:694px" width="17" height="16"><rect x=".5" y=".5" width="15" height="14" fill="none" stroke="#808080"/><rect x="3.500" y="5.500" width="9" height="4" fill="none" stroke="#808080"/><path d="M8 2v3M8 10v3M0 7.500h3M13 7.500h3" stroke="#808080"/></svg>
<svg style="left:165px;top:694px" width="17" height="16"><rect x=".5" y=".5" width="15" height="14" fill="none" stroke="#808080"/><rect x="6.500" y="3.500" width="4" height="9" fill="none" stroke="#808080"/><path d="M2 7.500h4M11 7.500h4M8 0v3M8 13v3" stroke="#808080"/></svg>
<div class="sep" style="left:190px;top:693px;height:19px"></div>
<svg style="left:197px;top:694px" width="16" height="15"><path d="M0 1h3v13H0M16 1h-3v13h3M4 7.500h8M4 7.500l2-2M4 7.500l2 2M12 7.500l-2-2M12 7.500l-2 2" stroke="#808080" fill="none"/></svg>
<svg style="left:219px;top:694px" width="16" height="15"><path d="M1 0v3h13V0M1 15v-3h13v3M7.500 4v7M7.500 4l-2 2M7.500 4l2 2M7.500 11l-2-2M7.500 11l2-2" stroke="#808080" fill="none"/></svg>
<div class="sep" style="left:243px;top:693px;height:19px"></div>
<svg style="left:250px;top:695px" width="16" height="13"><rect x=".5" y="2.500" width="14" height="7" fill="none" stroke="#808080"/><path d="M3 6h9M3 6l2-2M3 6l2 2M12 6l-2-2M12 6l-2 2" stroke="#404040" opacity=".7" fill="none"/></svg>
<svg style="left:275px;top:694px" width="14" height="16"><rect x="2.500" y=".5" width="8" height="14" fill="none" stroke="#808080"/><path d="M6.500 3v9M6.500 3l-2 2M6.500 3l2 2M6.500 12l-2-2M6.500 12l2-2" stroke="#404040" opacity=".7" fill="none"/></svg>
<svg style="left:296px;top:694px" width="16" height="15"><rect x=".5" y=".5" width="14" height="13" fill="none" stroke="#808080"/><path d="M3 7h9M7.500 3v8M3 7l2-2M3 7l2 2M12 7l-2-2M12 7l-2 2M7.500 3l-2 2M7.500 3l2 2M7.500 11l-2-2M7.500 11l2-2" stroke="#404040" opacity=".7" fill="none"/></svg>
<div class="sep" style="left:320px;top:693px;height:19px"></div>
<svg style="left:327px;top:693px" width="16" height="16"><defs><pattern id="gr" width="2" height="2" patternUnits="userSpaceOnUse"><rect width="1" height="1" fill="#404040"/></pattern></defs><rect width="15" height="15" fill="url(#gr)"/></svg>
<div class="d pr" style="left:348px;top:689px;width:23px;height:23px"></div>
<svg style="left:351px;top:692px" width="17" height="17"><path d="M3 0h1v17H3zM13 0h1v17h-1zM0 3h17v1H0zM0 13h17v1H0z"/></svg>

<div style="left:0;top:714px;width:1366px;height:1px;background:#808080"></div>
<div style="left:0;top:715px;width:1366px;height:1px;background:#fff"></div>

<!-- status bar -->
<div class="t cj" style="left:6px;top:721px;font-size:15px;line-height:18px">就绪</div>
<div style="left:0;top:739px;width:1366px;height:1px;background:#fff"></div>
<div style="left:1130px;top:718px;width:94px;height:21px;border-left:1px solid #808080;border-top:1px solid #808080;border-right:1px solid #fff;border-bottom:1px solid #fff"></div>
<div style="left:1226px;top:718px;width:66px;height:21px;border-left:1px solid #808080;border-top:1px solid #808080"></div>
<svg style="left:1133px;top:720px" width="16" height="15"><path d="M5.500 0v5M0 5.500h5" stroke="#000"/><rect x="5.500" y="5.500" width="9" height="8" fill="none" stroke="#000" stroke-dasharray="1 1"/></svg>
<div class="t" style="left:1164px;top:721px;font-weight:bold;font-size:13.300px;letter-spacing:.5px">0, 0</div>
<svg style="left:1228px;top:719px" width="17" height="17"><path d="M.5 5v12M0 5h3M0 16h3M6 1v3M16 1v3M6 2h10" stroke="#000" fill="none"/><rect x="5.500" y="5.500" width="9" height="9" fill="none" stroke="#000" stroke-dasharray="1 1"/></svg>
<div class="t" style="left:1252px;top:721px;font-weight:bold;font-size:13.300px;letter-spacing:.5px">187 x</div>
<div style="left:1291px;top:714px;width:75px;height:25px;background:linear-gradient(#fbfbfd,#eef1f6);border:2px solid #7aa0d0"></div>
<svg style="left:1294px;top:720px" width="6" height="13"><path d="M0 0h2v2H0zM3 0h2v2H3zM0 4h2v2H0zM3 4h2v2H3zM0 8h2v2H0zM3 8h2v2H3z" fill="#c3d3ec"/></svg>
<div class="t cj" style="left:1308px;top:718px;font-size:13px;color:#333;font-weight:bold">中</div>
<svg style="left:1328px;top:720px" width="10" height="13" shape-rendering="geometricPrecision"><path d="M5 1Q9 6 1 11Q8 11 9 6Q9 2 5 1z" fill="#333"/></svg>
<svg style="left:1344px;top:720px" width="13" height="12"><rect x="3" y="0" width="6" height="6" fill="#222" rx="2"/><rect x="1" y="6" width="10" height="6" fill="#222"/></svg>

</body></html>
